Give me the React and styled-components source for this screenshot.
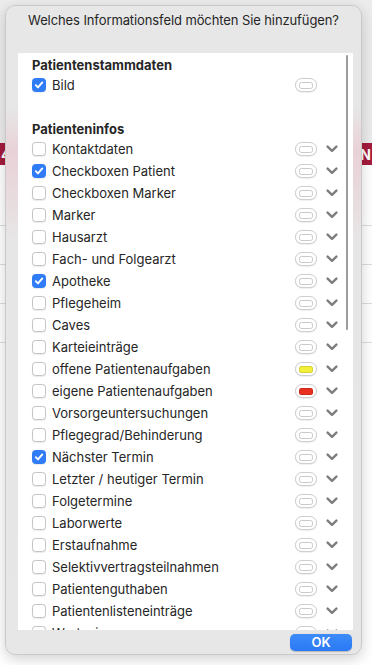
import React from "react";
import styled, { createGlobalStyle } from "styled-components";

const GlobalStyle = createGlobalStyle`
  html, body {
    margin: 0;
    padding: 0;
  }
  body {
    font-family: Inter, "Liberation Sans", "Noto Sans", sans-serif;
    -webkit-font-smoothing: antialiased;
  }
`;

const stammdaten = [{ label: "Bild", checked: true, noMenu: true }];

const infos = [
  { label: "Kontaktdaten" },
  { label: "Checkboxen Patient", checked: true },
  { label: "Checkboxen Marker" },
  { label: "Marker" },
  { label: "Hausarzt" },
  { label: "Fach- und Folgearzt" },
  { label: "Apotheke", checked: true },
  { label: "Pflegeheim" },
  { label: "Caves" },
  { label: "Karteieinträge" },
  { label: "offene Patientenaufgaben", color: "#f3f03c" },
  { label: "eigene Patientenaufgaben", color: "#e9311f" },
  { label: "Vorsorgeuntersuchungen" },
  { label: "Pflegegrad/Behinderung" },
  { label: "Nächster Termin", checked: true },
  { label: "Letzter / heutiger Termin" },
  { label: "Folgetermine" },
  { label: "Laborwerte" },
  { label: "Erstaufnahme" },
  { label: "Selektivvertragsteilnahmen" },
  { label: "Patientenguthaben" },
  { label: "Patientenlisteneinträge" },
  { label: "Wartezimmer" },
];

export default function App() {
  return (
    <>
      <GlobalStyle />
      <Screen>
        <AppTop />
        <AppBand>
          <span>4</span>
          <span>N</span>
        </AppBand>
        <AppBody>
          <AppLine />
          <AppLine />
          <AppLine />
          <AppLine />
        </AppBody>

        <Dialog>
          <Title>Welches Informationsfeld möchten Sie hinzufügen?</Title>
          <ListPanel>
            <Section>
              <SectionHeader>Patientenstammdaten</SectionHeader>
              {stammdaten.map((item) => (
                <FieldRow key={item.label} {...item} />
              ))}
            </Section>
            <Section $gap>
              <SectionHeader>Patienteninfos</SectionHeader>
              {infos.map((item) => (
                <FieldRow key={item.label} {...item} />
              ))}
            </Section>
            <ScrollThumb />
          </ListPanel>
          <Footer>
            <OkButton>OK</OkButton>
          </Footer>
        </Dialog>
      </Screen>
    </>
  );
}

function FieldRow({ label, checked, color, noMenu }) {
  return (
    <Row>
      <Check $checked={checked}>
        {checked && (
          <svg width="10" height="10" viewBox="0 0 10 10">
            <path
              d="M1.8 5.2 L4 7.4 L8.3 2.4"
              fill="none"
              stroke="#fff"
              strokeWidth="1.9"
              strokeLinecap="round"
              strokeLinejoin="round"
            />
          </svg>
        )}
      </Check>
      <Label>{label}</Label>
      <ColorWell>
        <Swatch $color={color} />
      </ColorWell>
      <Chevron $hidden={noMenu}>
        <svg width="12" height="8" viewBox="0 0 12 8">
          <path
            d="M1.6 1.6 L6 5.8 L10.4 1.6"
            fill="none"
            stroke="#7d7d7d"
            strokeWidth="2.4"
            strokeLinecap="round"
            strokeLinejoin="round"
          />
        </svg>
      </Chevron>
    </Row>
  );
}

const Screen = styled.div`
  position: relative;
  width: 372px;
  height: 665px;
  overflow: hidden;
  background: #f4f4f4;
  display: flex;
  flex-direction: column;
`;

const AppTop = styled.div`
  height: 143px;
  background: #ececec;
`;

const AppBand = styled.div`
  height: 22px;
  background: #a51b3d;
  color: #fff;
  font-weight: 700;
  font-size: 14px;
  display: flex;
  justify-content: space-between;
  align-items: center;
  padding: 0 1px;
`;

const AppBody = styled.div`
  flex: 1;
  background: #fff;
  display: flex;
  flex-direction: column;
  gap: 38px;
  padding-top: 60px;
`;

const AppLine = styled.div`
  height: 1px;
  background: #dcdcdc;
`;

const Dialog = styled.div`
  position: absolute;
  top: 5px;
  left: 5px;
  width: 357px;
  height: 650px;
  box-sizing: border-box;
  border-radius: 10px;
  border: 1px solid #c9c9c9;
  box-shadow: 0 4px 14px rgba(0, 0, 0, 0.18);
  background: linear-gradient(
    to bottom,
    #e7e7e7 0px,
    #e7e7e7 100px,
    #e9d2d7 145px,
    #e8dadd 185px,
    #e7e6e6 235px,
    #e7e7e7 100%
  );
  display: flex;
  flex-direction: column;
`;

const Title = styled.div`
  height: 47px;
  padding-top: 6px;
  box-sizing: border-box;
  text-align: center;
  font-size: 13px;
  color: #262626;
  letter-spacing: -0.1px;
`;

const ListPanel = styled.div`
  position: relative;
  margin: 0 8px 0 12px;
  height: 577px;
  background: #fff;
  overflow: hidden;
  padding: 4px 15px 0 14px;
  box-sizing: border-box;
`;

const Section = styled.div`
  display: flex;
  flex-direction: column;
  margin-top: ${(p) => (p.$gap ? "25px" : "0")};
`;

const SectionHeader = styled.div`
  height: 17px;
  line-height: 17px;
  font-size: 13px;
  font-weight: 700;
  color: #262626;
`;

const Row = styled.div`
  display: flex;
  align-items: center;
  height: 22px;
  flex-shrink: 0;
`;

const Check = styled.div`
  width: 14px;
  height: 14px;
  box-sizing: border-box;
  border-radius: 3.5px;
  border: 1px solid ${(p) => (p.$checked ? "#2f7cf6" : "#c4c4c4")};
  background: ${(p) => (p.$checked ? "#2f7cf6" : "#fff")};
  box-shadow: 0 0.5px 1px rgba(0, 0, 0, 0.08);
  display: flex;
  align-items: center;
  justify-content: center;
  flex-shrink: 0;
`;

const Label = styled.div`
  flex: 1;
  margin-left: 6px;
  font-size: 13px;
  color: #262626;
  white-space: nowrap;
`;

const ColorWell = styled.div`
  width: 22px;
  height: 14px;
  box-sizing: border-box;
  border-radius: 7px;
  border: 1px solid #cfcfcf;
  background: #fff;
  box-shadow: 0 0.5px 1px rgba(0, 0, 0, 0.12);
  display: flex;
  align-items: center;
  justify-content: center;
`;

const Swatch = styled.div`
  width: 14px;
  height: 7px;
  box-sizing: border-box;
  border-radius: 2.5px;
  border: 1px solid ${(p) => (p.$color ? "rgba(0,0,0,0.12)" : "#c9c9c9")};
  background: ${(p) => p.$color || "#fff"};
`;

const Chevron = styled.div`
  width: 12px;
  margin-left: 9px;
  display: flex;
  align-items: center;
  justify-content: center;
  visibility: ${(p) => (p.$hidden ? "hidden" : "visible")};
`;

const ScrollThumb = styled.div`
  position: absolute;
  top: 2px;
  right: 5px;
  width: 2.5px;
  height: 275px;
  border-radius: 2px;
  background: #9d9d9d;
`;

const Footer = styled.div`
  display: flex;
  justify-content: flex-end;
  padding: 4px 9px 0 0;
`;

const OkButton = styled.button`
  width: 62px;
  height: 17px;
  border: none;
  border-radius: 5px;
  background: linear-gradient(to bottom, #3d8cf8, #2a78f5);
  color: #fff;
  font-family: inherit;
  font-size: 13px;
  font-weight: 600;
  padding: 0;
  line-height: 17px;
  box-shadow: 0 0.5px 1px rgba(0, 0, 0, 0.2);
`;
